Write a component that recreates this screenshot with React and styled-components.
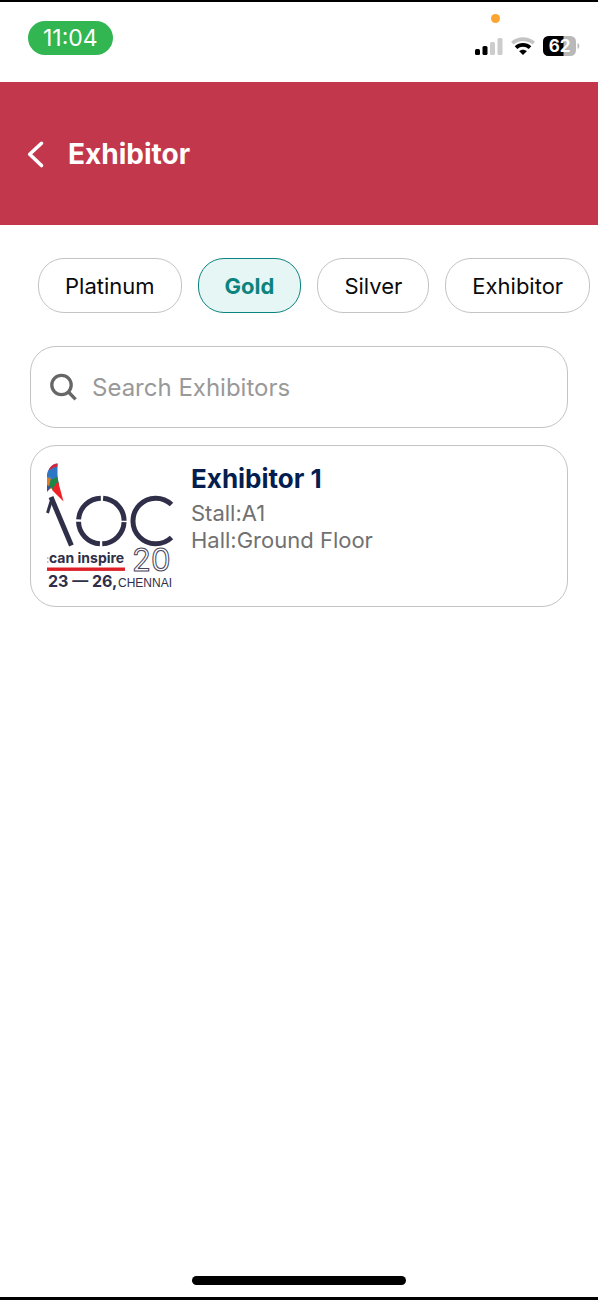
import React, { useState } from 'react';
import styled, { createGlobalStyle } from 'styled-components';

const GlobalStyle = createGlobalStyle`
  * {
    box-sizing: border-box;
  }

  body {
    margin: 0;
    background: #fff;
    font-family: Inter, "Liberation Sans", sans-serif;
  }
`;

const Screen = styled.div`
  display: flex;
  flex-direction: column;
  min-height: 100vh;
  border-top: 2px solid #000;
  border-bottom: 3px solid #000;
  background: #fff;
`;

const StatusBar = styled.div`
  display: flex;
  justify-content: space-between;
  align-items: flex-start;
  height: 80px;
  padding: 19px 18px 0 28px;
`;

const TimePill = styled.div`
  padding: 0 15px;
  border-radius: 17px;
  background: #31b652;
  color: #fff;
  font-size: 23px;
  line-height: 34px;
`;

const StatusIcons = styled.div`
  position: relative;
  display: flex;
  align-items: center;
  gap: 8px;
  padding-top: 15px;
`;

const RecordingDot = styled.span`
  position: absolute;
  top: -7px;
  left: 16px;
  width: 9px;
  height: 9px;
  border-radius: 50%;
  background: #fba42f;
`;

const Header = styled.header`
  display: flex;
  align-items: center;
  gap: 16px;
  height: 143px;
  padding: 0 20px;
  background: #c3374c;
`;

const BackButton = styled.button`
  display: flex;
  padding: 4px;
  border: 0;
  background: none;
  color: #fff;
  cursor: pointer;
`;

const HeaderTitle = styled.h1`
  margin: 0;
  color: #fff;
  font-size: 28px;
  font-weight: 700;
  line-height: 32px;
`;

const Chips = styled.div`
  display: flex;
  gap: 16px;
  padding: 33px 7px 33px 38px;
  overflow-x: auto;
  scrollbar-width: none;
`;

const Chip = styled.button`
  flex: none;
  height: 55px;
  padding: 0 26px;
  border: 1px solid ${({ $active }) => ($active ? '#0b8480' : '#c4c4c4')};
  border-radius: 26px;
  background: ${({ $active }) => ($active ? '#e6f6f5' : '#fff')};
  color: ${({ $active }) => ($active ? '#0b8480' : '#0a0a0a')};
  font-family: inherit;
  font-size: 22px;
  font-weight: ${({ $active }) => ($active ? 700 : 400)};
  cursor: pointer;
`;

const Content = styled.main`
  display: flex;
  flex: 1;
  flex-direction: column;
  gap: 17px;
  padding: 0 30px;
`;

const SearchBox = styled.label`
  display: flex;
  align-items: center;
  gap: 14px;
  height: 82px;
  padding: 0 18px;
  border: 1px solid #c4c4c4;
  border-radius: 26px;
`;

const SearchInput = styled.input`
  flex: 1;
  min-width: 0;
  padding: 0;
  border: 0;
  outline: 0;
  background: none;
  color: #222;
  font-family: inherit;
  font-size: 24px;

  &::placeholder {
    color: #999;
    opacity: 1;
  }
`;

const Card = styled.article`
  display: flex;
  gap: 18px;
  padding: 17px 16px;
  border: 1px solid #c4c4c4;
  border-radius: 26px;
`;

const CardName = styled.h2`
  margin: 0 0 5px;
  color: #041e4f;
  font-size: 26px;
  font-weight: 700;
  line-height: 32px;
`;

const CardLine = styled.p`
  margin: 0;
  color: #717171;
  font-size: 22px;
  line-height: 27px;
`;

const HomeIndicator = styled.div`
  align-self: center;
  width: 214px;
  height: 9px;
  margin: 12px 0;
  border-radius: 5px;
  background: #000;
`;

const Logo = styled.svg`
  flex: none;
  overflow: visible;
`;

const SignalIcon = () => (
    <svg width="28" height="18" viewBox="0 0 28 18" aria-hidden="true">
        <rect x="0" y="12" width="5" height="6" rx="1.5" fill="#000" />
        <rect x="7.5" y="9" width="5" height="9" rx="1.5" fill="#000" />
        <rect x="15" y="5" width="5" height="13" rx="1.5" fill="#ccc" />
        <rect x="22.5" y="1" width="5" height="17" rx="1.5" fill="#ccc" />
    </svg>
);

const WifiIcon = () => (
    <svg width="24" height="18" viewBox="0 0 24 18" fill="none" aria-hidden="true">
        <path d="M1.3 6.2C7.3 .8 16.7 .8 22.7 6.2" stroke="#c4c4c4" strokeWidth="3.8" />
        <path d="M5 10.7c4-3.7 10-3.7 14 0" stroke="#000" strokeWidth="3.8" />
        <path d="M12 18l-3.8-3.8c2.1-2 5.5-2 7.6 0z" fill="#000" />
    </svg>
);

const BatteryIcon = () => (
    <svg width="37" height="20" viewBox="0 0 37 20" aria-hidden="true">
        <rect width="33" height="20" rx="5.5" fill="#b9b9b9" />
        <path d="M5.5 0H20.5V20H5.5A5.5 5.5 0 0 1 0 14.5V5.5A5.5 5.5 0 0 1 5.5 0z" fill="#000" />
        <path d="M34.5 7c2.4 1 2.4 5 0 6z" fill="#b9b9b9" />
        <text x="16.5" y="16" textAnchor="middle" fontSize="17" fontWeight="700" fill="#fff">62</text>
    </svg>
);

const BackIcon = () => (
    <svg width="24" height="30" viewBox="0 0 24 30" fill="none" stroke="currentColor" strokeWidth="3.6" strokeLinecap="round" strokeLinejoin="round">
        <path d="M17.5 4.3L5.7 15.3 17.5 26.5" />
    </svg>
);

const SearchIcon = () => (
    <svg width="29" height="29" viewBox="0 0 29 29" fill="none" stroke="#666" strokeWidth="3.3" aria-hidden="true">
        <circle cx="12.5" cy="12" r="9.7" />
        <path d="M19 18.5l7.6 7.8" />
    </svg>
);

const EventLogo = () => (
    <Logo width="126" height="126" viewBox="0 0 126 126" fill="none" role="img" aria-label="AOC Chennai">
        {/* feather */}
        <path d="M0 11C1.5 5 5 1 10.5 .5V14L0 15z" fill="#2d78c4" />
        <path d="M1.5 8C3 3.5 6 .8 10.5 .5V3.500C6.500 4 4 6 1.500 8z" fill="#d9243c" />
        <path d="M0 15l10.5-2 1 9L0 25z" fill="#2f78bd" />
        <path d="M0 14l4 2 1 9-5 3z" fill="#e07b2b" />
        <path d="M3.5 17l7-3 1.5 8-6 5-4-4z" fill="#1d8548" />
        <path d="M0 22l4 2-4 5z" fill="#35549b" />
        <path d="M11 18l5.500 20.500L5 27z" fill="#ee2228" />
        {/* monogram */}
        <g stroke="#302f49" strokeWidth="5">
            <path d="M.5 50L4.500 37" strokeWidth="3" />
            <path d="M4 34L24.400 82.500" />
            <circle cx="54.300" cy="58" r="22.800" strokeDasharray="33.400 2.415" strokeDashoffset="-1.200" />
            <path d="M124.500 41.500A22.800 22.800 0 1 0 124.500 74.500" />
        </g>
        <path d="M0 95h1.500M0 99h1.500" stroke="#aaa" strokeWidth="1.5" />
        <text x="2" y="100" fontSize="14" fontWeight="700" fill="#302f49">can inspire</text>
        <rect y="104.500" width="78" height="3.400" fill="#dd2027" />
        <text x="85" y="108" fontSize="31" stroke="#45445a" strokeWidth="1" fill="#fff">20</text>
        <text x="1" y="124" fontSize="16" fontWeight="700" fill="#302f49">23 — 26,</text>
        <text x="71" y="124" fontSize="12" fontFamily="Liberation Sans" fill="#302f49">CHENNAI</text>
    </Logo>
);

const categories = ['Platinum', 'Gold', 'Silver', 'Exhibitor'];

const exhibitors = [
    { id: 1, name: 'Exhibitor 1', stall: 'A1', hall: 'Ground Floor', category: 'Gold' },
];

const ExhibitorCard = ({ exhibitor }) => (
    <Card>
        <EventLogo />
        <div>
            <CardName>{exhibitor.name}</CardName>
            <CardLine>Stall:{exhibitor.stall}</CardLine>
            <CardLine>Hall:{exhibitor.hall}</CardLine>
        </div>
    </Card>
);

const App = () => {
    const [category, setCategory] = useState('Gold');
    const [search, setSearch] = useState('');

    const visible = exhibitors.filter(
        (item) => item.category === category && item.name.toLowerCase().includes(search.toLowerCase())
    );

    return (
        <Screen>
            <GlobalStyle />
            <StatusBar>
                <TimePill>11:04</TimePill>
                <StatusIcons>
                    <RecordingDot />
                    <SignalIcon />
                    <WifiIcon />
                    <BatteryIcon />
                </StatusIcons>
            </StatusBar>
            <Header>
                <BackButton type="button" aria-label="Back">
                    <BackIcon />
                </BackButton>
                <HeaderTitle>Exhibitor</HeaderTitle>
            </Header>
            <Chips>
                {categories.map((item) => (
                    <Chip key={item} type="button" $active={item === category} onClick={() => setCategory(item)}>
                        {item}
                    </Chip>
                ))}
            </Chips>
            <Content>
                <SearchBox>
                    <SearchIcon />
                    <SearchInput
                        type="text"
                        aria-label="Search Exhibitors"
                        placeholder="Search Exhibitors"
                        value={search}
                        onChange={(e) => setSearch(e.target.value)}
                    />
                </SearchBox>
                {visible.map((item) => (
                    <ExhibitorCard key={item.id} exhibitor={item} />
                ))}
            </Content>
            <HomeIndicator />
        </Screen>
    );
};

export default App;
